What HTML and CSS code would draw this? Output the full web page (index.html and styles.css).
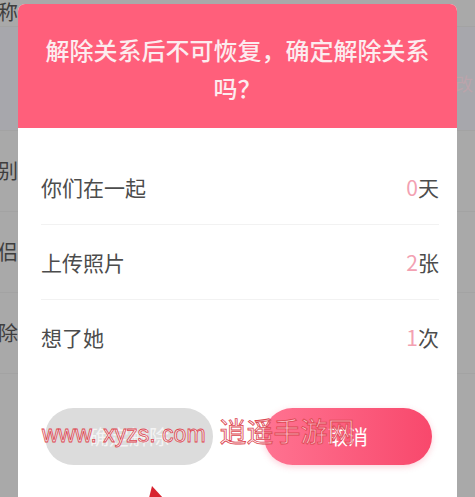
FILE: index.html
```html
<!DOCTYPE html>
<html lang="zh-CN">
<head>
<meta charset="utf-8">
<title>解除关系</title>
<link rel="stylesheet" href="styles.css">
</head>
<body>
<div class="page">
  <div class="bg-row bg-first"><span class="bg-label">昵称</span></div>
  <div class="bg-row bg-tall"><span class="bg-right">改</span></div>
  <div class="bg-row"><span class="bg-label">性别</span></div>
  <div class="bg-row"><span class="bg-label">情侣</span></div>
  <div class="bg-row"><span class="bg-label">解除</span></div>
</div>

<div class="dialog">
  <div class="dialog-head">解除关系后不可恢复，确定解除关系吗？</div>
  <div class="dialog-body">
    <div class="stat">
      <span class="stat-name">你们在一起</span>
      <span class="stat-val"><em>0</em>天</span>
    </div>
    <div class="stat">
      <span class="stat-name">上传照片</span>
      <span class="stat-val"><em>2</em>张</span>
    </div>
    <div class="stat">
      <span class="stat-name">想了她</span>
      <span class="stat-val"><em>1</em>次</span>
    </div>
    <div class="actions">
      <button class="btn btn-gray">确定解除</button>
      <button class="btn btn-pink">取消</button>
    </div>
  </div>
</div>

<div class="watermark"><span class="wm-latin">www. xyzs. com</span><span class="wm-cjk">逍遥手游网</span></div>

<svg class="pointer" width="16" height="12" viewBox="0 0 16 12"><polygon points="3,0 14,12 0,12" fill="#d8232f"/></svg>
</body>
</html>
```

FILE: styles.css
```css
html, body {
  margin: 0;
  padding: 0;
}
body {
  width: 475px;
  height: 497px;
  overflow: hidden;
  background: #a9a9a9;
  font-family: "Noto Sans CJK SC", "Noto Sans", sans-serif;
  position: relative;
}
.page {
  display: flex;
  flex-direction: column;
}
.bg-row {
  height: 80px;
  display: flex;
  align-items: center;
  justify-content: space-between;
  border-bottom: 1px solid #a3a3a3;
}
.bg-first {
  height: 26px;
  align-items: flex-start;
}
.bg-tall {
  height: 103px;
  background: #a7a7ac;
}
.bg-label {
  margin-left: -22px;
  font-size: 20px;
  line-height: 24px;
  color: #3e3e3e;
}
.bg-right {
  margin-left: auto;
  margin-right: 2px;
  margin-top: 8px;
  font-size: 18px;
  color: #c9a3ab;
  opacity: 0.6;
}
.dialog {
  position: absolute;
  left: 18px;
  top: 4px;
  width: 439px;
  height: 493px;
  background: #ffffff;
  border-radius: 7px 7px 0 0;
  overflow: hidden;
}
.dialog-head {
  height: 124px;
  box-sizing: border-box;
  padding: 27px 24px 0;
  background: #ff5f7b;
  color: #fcecef;
  font-size: 24px;
  font-weight: 500;
  line-height: 38px;
  text-align: center;
}
.dialog-body {
  padding: 22px 18px 0 23px;
}
.stat {
  height: 74px;
  display: flex;
  align-items: center;
  justify-content: space-between;
  border-bottom: 1px solid #f2f2f2;
  font-size: 21px;
  color: #4c4c4c;
}
.stat:nth-child(3) {
  border-bottom: none;
}
.stat-val em {
  font-style: normal;
  color: #f3a1b2;
}
.actions {
  display: flex;
  justify-content: space-between;
  margin-top: 34px;
  padding: 0 7px 0 4px;
}
.btn {
  width: 168px;
  height: 57px;
  border: none;
  border-radius: 29px;
  font-family: "Noto Sans CJK SC", sans-serif;
  font-size: 20px;
  color: #ffffff;
}
.btn-gray {
  background: #dcdcdc;
  color: #f4f4f4;
}
.btn-pink {
  background: linear-gradient(to right, #ff7391, #f8486c);
  box-shadow: 0 2px 6px rgba(248, 72, 108, 0.25);
}
.watermark {
  position: absolute;
  left: 42px;
  top: 414px;
  display: flex;
  align-items: baseline;
  gap: 14px;
  color: rgba(255, 240, 242, 0.6);
  -webkit-text-stroke: 0.8px #dc4650;
  line-height: 34px;
  pointer-events: none;
}
.wm-latin {
  font-family: "Liberation Sans", sans-serif;
  font-size: 23px;
}
.wm-cjk {
  font-family: "Noto Sans CJK SC", sans-serif;
  font-size: 27px;
}
.pointer {
  position: absolute;
  left: 149px;
  top: 486px;
}
```
